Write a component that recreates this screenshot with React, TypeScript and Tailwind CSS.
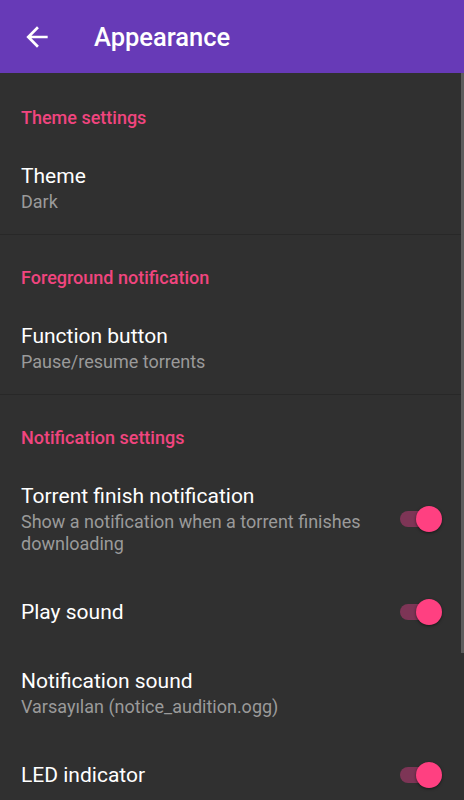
import React from 'react';

const font = { fontFamily: 'Roboto, "Noto Sans", sans-serif' };

function Toggle() {
  return (
    <div className="relative w-[42px] h-[26px] shrink-0">
      <div className="absolute left-0 top-[5px] w-[38px] h-[16px] rounded-full bg-[#7d3556]" />
      <div className="absolute right-0 top-0 w-[26px] h-[26px] rounded-full bg-[#ff4081] shadow-[0_1px_3px_rgba(0,0,0,0.5)]" />
    </div>
  );
}

function Category({ title, first }: { title: string; first?: boolean }) {
  return (
    <div className={`px-[21px] ${first ? 'pt-[33px]' : 'pt-[31px]'} pb-[13px]`}>
      <div className="text-[18px] leading-[24px] font-medium text-[#f0457f]">{title}</div>
    </div>
  );
}

function Item({ title, summary, toggle }: { title: string; summary?: string; toggle?: boolean }) {
  if (!summary) {
    return (
      <div className="h-[72px] flex items-center pl-[21px] pr-[22px]">
        <div className="flex-1 text-[21px] leading-[26px] text-white">{title}</div>
        {toggle && <Toggle />}
      </div>
    );
  }
  return (
    <div className="flex items-center pl-[21px] pr-[22px] pt-[20px] pb-[21px]">
      <div className="flex-1 pr-[30px]">
        <div className="text-[21px] leading-[26px] text-white">{title}</div>
        <div className="mt-[2px] text-[18px] leading-[22px] text-[#9a9a9a]">{summary}</div>
      </div>
      {toggle && <Toggle />}
    </div>
  );
}

export default function App() {
  return (
    <div className="relative w-[464px] h-[800px] overflow-hidden bg-[#303030]" style={font}>
      {/* Toolbar */}
      <div className="h-[73px] bg-[#673ab7] flex items-center">
        <svg className="ml-[21px] mt-[1px]" width="32" height="32" viewBox="0 0 24 24" fill="white">
          <path d="M20 11H7.83l5.59-5.59L12 4l-8 8 8 8 1.41-1.41L7.83 13H20v-2z" />
        </svg>
        <div className="ml-[41px] mt-[2px] text-[25.5px] font-medium text-white">Appearance</div>
      </div>

      <Category title="Theme settings" first />
      <Item title="Theme" summary="Dark" />
      <div className="h-px bg-[#282828]" />

      <Category title="Foreground notification" />
      <Item title="Function button" summary="Pause/resume torrents" />
      <div className="h-px bg-[#282828]" />

      <Category title="Notification settings" />
      <Item
        title="Torrent finish notification"
        summary="Show a notification when a torrent finishes downloading"
        toggle
      />
      <Item title="Play sound" toggle />
      <Item title="Notification sound" summary="Varsayılan (notice_audition.ogg)" />
      <Item title="LED indicator" toggle />

      {/* scroll indicator */}
      <div className="absolute right-0 top-[73px] w-[3px] h-[580px] bg-[#5c5c5c]" />
    </div>
  );
}
